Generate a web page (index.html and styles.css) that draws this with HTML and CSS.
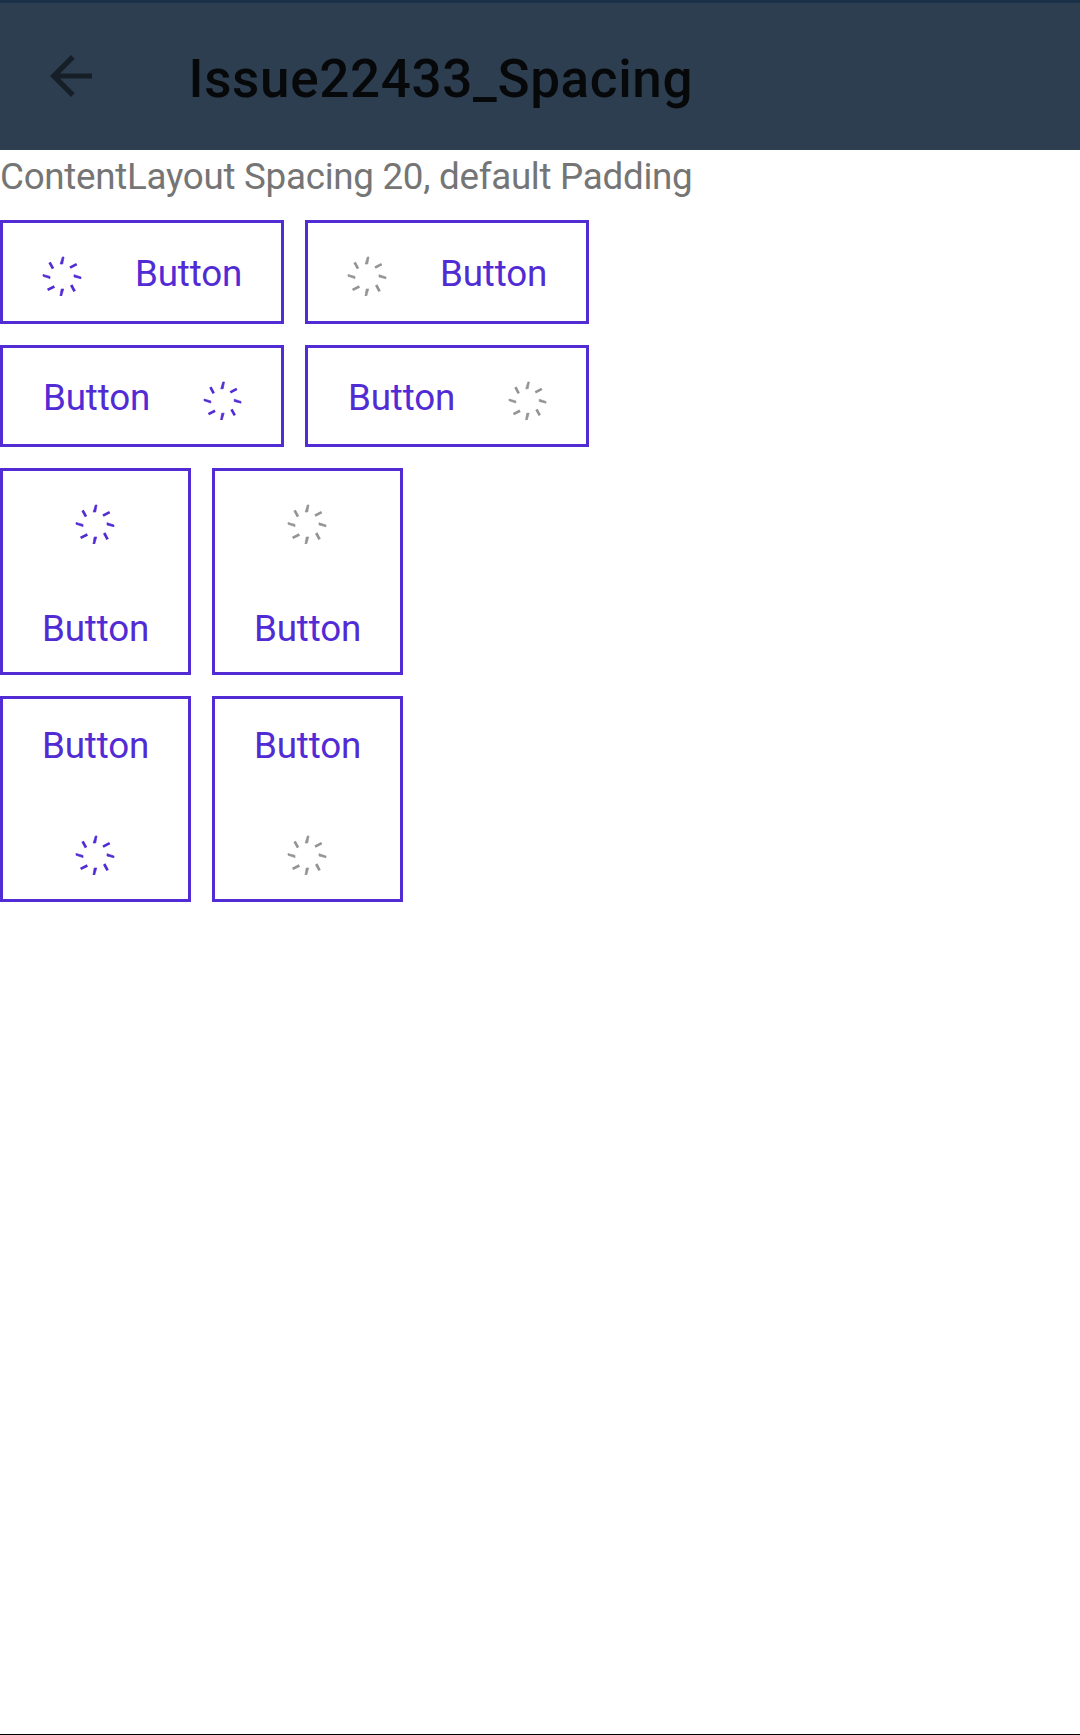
FILE: index.html
```html
<!DOCTYPE html>
<html lang="en">
<head>
<meta charset="utf-8">
<title>Issue22433_Spacing</title>
<link rel="stylesheet" href="styles.css">
</head>
<body>
<svg class="sprite" aria-hidden="true">
  <symbol id="spinner" viewBox="0 0 40 40">
    <path fill="currentColor" stroke="currentColor" stroke-width="0.7" d="M20.3 1H22L20.7 8H18.2ZM19.2 33H21.7L19.7 40H18ZM32 18.7L39 21V22.7L32 21ZM1 18.5L8 20.4V22.6L1 20.2Z"/>
    <path fill="none" stroke="currentColor" stroke-width="2.7" d="M34.7 8.1L28 11.6M29.2 29L32.6 35.3M12.4 30.5L5.6 33.9M11 12.7L7.6 6.3"/>
  </symbol>
</svg>
<header class="toolbar">
  <svg class="back" viewBox="0 0 42 42" role="img" aria-label="Back"><path d="M42 18.4H10L24.7 3.7L21 0L0 21L21 42L24.7 38.3L10 23.6H42Z"/></svg>
  <h1 class="title">Issue22433_Spacing</h1>
</header>
<main class="content">
  <p class="label">ContentLayout Spacing 20, default Padding</p>
  <div class="row">
    <button class="btn left"><svg class="icon"><use href="#spinner"/></svg><span>Button</span></button>
    <button class="btn left"><svg class="icon gray"><use href="#spinner"/></svg><span>Button</span></button>
  </div>
  <div class="row">
    <button class="btn right"><span>Button</span><svg class="icon"><use href="#spinner"/></svg></button>
    <button class="btn right"><span>Button</span><svg class="icon gray"><use href="#spinner"/></svg></button>
  </div>
  <div class="row">
    <button class="btn top"><svg class="icon"><use href="#spinner"/></svg><span>Button</span></button>
    <button class="btn top"><svg class="icon gray"><use href="#spinner"/></svg><span>Button</span></button>
  </div>
  <div class="row">
    <button class="btn bottom"><span>Button</span><svg class="icon"><use href="#spinner"/></svg></button>
    <button class="btn bottom"><span>Button</span><svg class="icon gray"><use href="#spinner"/></svg></button>
  </div>
</main>
</body>
</html>
```

FILE: styles.css
```css
* { box-sizing: border-box; }

body {
  margin: 0;
  height: 1735px;
  display: flex;
  flex-direction: column;
  overflow: hidden;
  background: #fff;
  border-bottom: 1px solid #000;
  font-family: Roboto, sans-serif;
}

.sprite { display: none; }

.toolbar {
  height: 150px;
  flex: none;
  display: flex;
  align-items: flex-start;
  background: #2d3e50;
  border-top: 3px solid #1b3147;
}

.back {
  width: 42px;
  height: 42px;
  margin: 52px 0 0 50px;
  fill: #161f28;
}

.title {
  margin: 46px 0 0 96.5px;
  font-size: 53px;
  font-weight: 500;
  letter-spacing: 0.65px;
  line-height: 60px;
  color: #06080a;
  white-space: nowrap;
}

.content {
  display: flex;
  flex-direction: column;
  gap: 21px;
}

.label {
  margin: 0;
  height: 49px;
  padding-top: 5px;
  font-size: 36.75px;
  letter-spacing: -0.28px;
  line-height: 44px;
  color: #757575;
  white-space: nowrap;
}

.row {
  display: flex;
  gap: 21px;
}

.btn {
  display: flex;
  align-items: flex-start;
  border: 3px solid #512bd4;
  background: transparent;
  color: #512bd4;
  font: 400 36.75px/44px Roboto, sans-serif;
  letter-spacing: -0.15px;
}

.icon {
  width: 40px;
  height: 40px;
  flex: none;
}

.gray { color: #949494; }

.left { width: 284px; height: 104px; padding: 29px 0 0 39px; gap: 53px; }
.left .icon { margin-top: 4px; }

.right { width: 284px; height: 102px; padding: 28px 39px 0 40px; justify-content: space-between; }
.right .icon { width: 39px; height: 39px; margin-top: 4.5px; }

.top,
.bottom { width: 191px; flex-direction: column; align-items: flex-start; padding: 0 0 0 39px; }
.top .icon,
.bottom .icon { margin-left: 33px; }

.top { height: 207px; padding-top: 33px; gap: 63px; }

.bottom { height: 206px; padding-top: 25px; gap: 67px; }
```
